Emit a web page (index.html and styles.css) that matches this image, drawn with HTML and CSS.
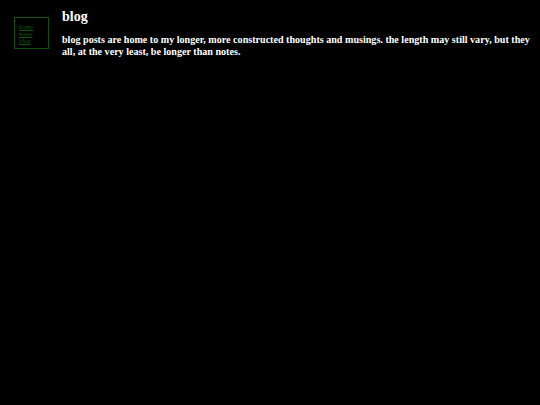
FILE: index.html
```html
<!DOCTYPE html>
<html>
<head>
<meta charset="utf-8">
<link rel="stylesheet" href="styles.css">
</head>
<body>
<div class="page">
  <nav class="nav">
    <a href="#">home</a>
    <a href="#">notes</a>
    <a href="#">blog</a>
  </nav>
  <main class="main">
    <h1 class="title">blog</h1>
    <p class="intro">blog posts are home to my longer, more constructed thoughts and musings. the length may still vary, but they all, at the very least, be longer than notes.</p>
  </main>
</div>
</body>
</html>
```
FILE: styles.css
```css
html, body {
  margin: 0;
  padding: 0;
  background: #000;
}
body {
  font-family: "Liberation Serif", "Times New Roman", serif;
  color: #fff;
}
.page {
  display: flex;
  align-items: flex-start;
  padding: 0 8px 0 14px;
}
.nav {
  margin-top: 17px;
  border: 1px solid #0c520c;
  display: flex;
  flex-direction: column;
  padding: 5px 0 0 4px;
  box-sizing: content-box;
  width: 29px;
  height: 25px;
}
.nav a {
  color: #0c5a0c;
  font-size: 6.4px;
  line-height: 7px;
}
.main {
  margin-left: 13px;
  flex: 1;
}
.title {
  font-size: 14px;
  font-weight: bold;
  margin: 7.5px 0 0 0;
  line-height: 18px;
}
.intro {
  font-size: 10.1px;
  font-weight: bold;
  line-height: 12px;
  margin: 8px 0 0 0;
}
```
